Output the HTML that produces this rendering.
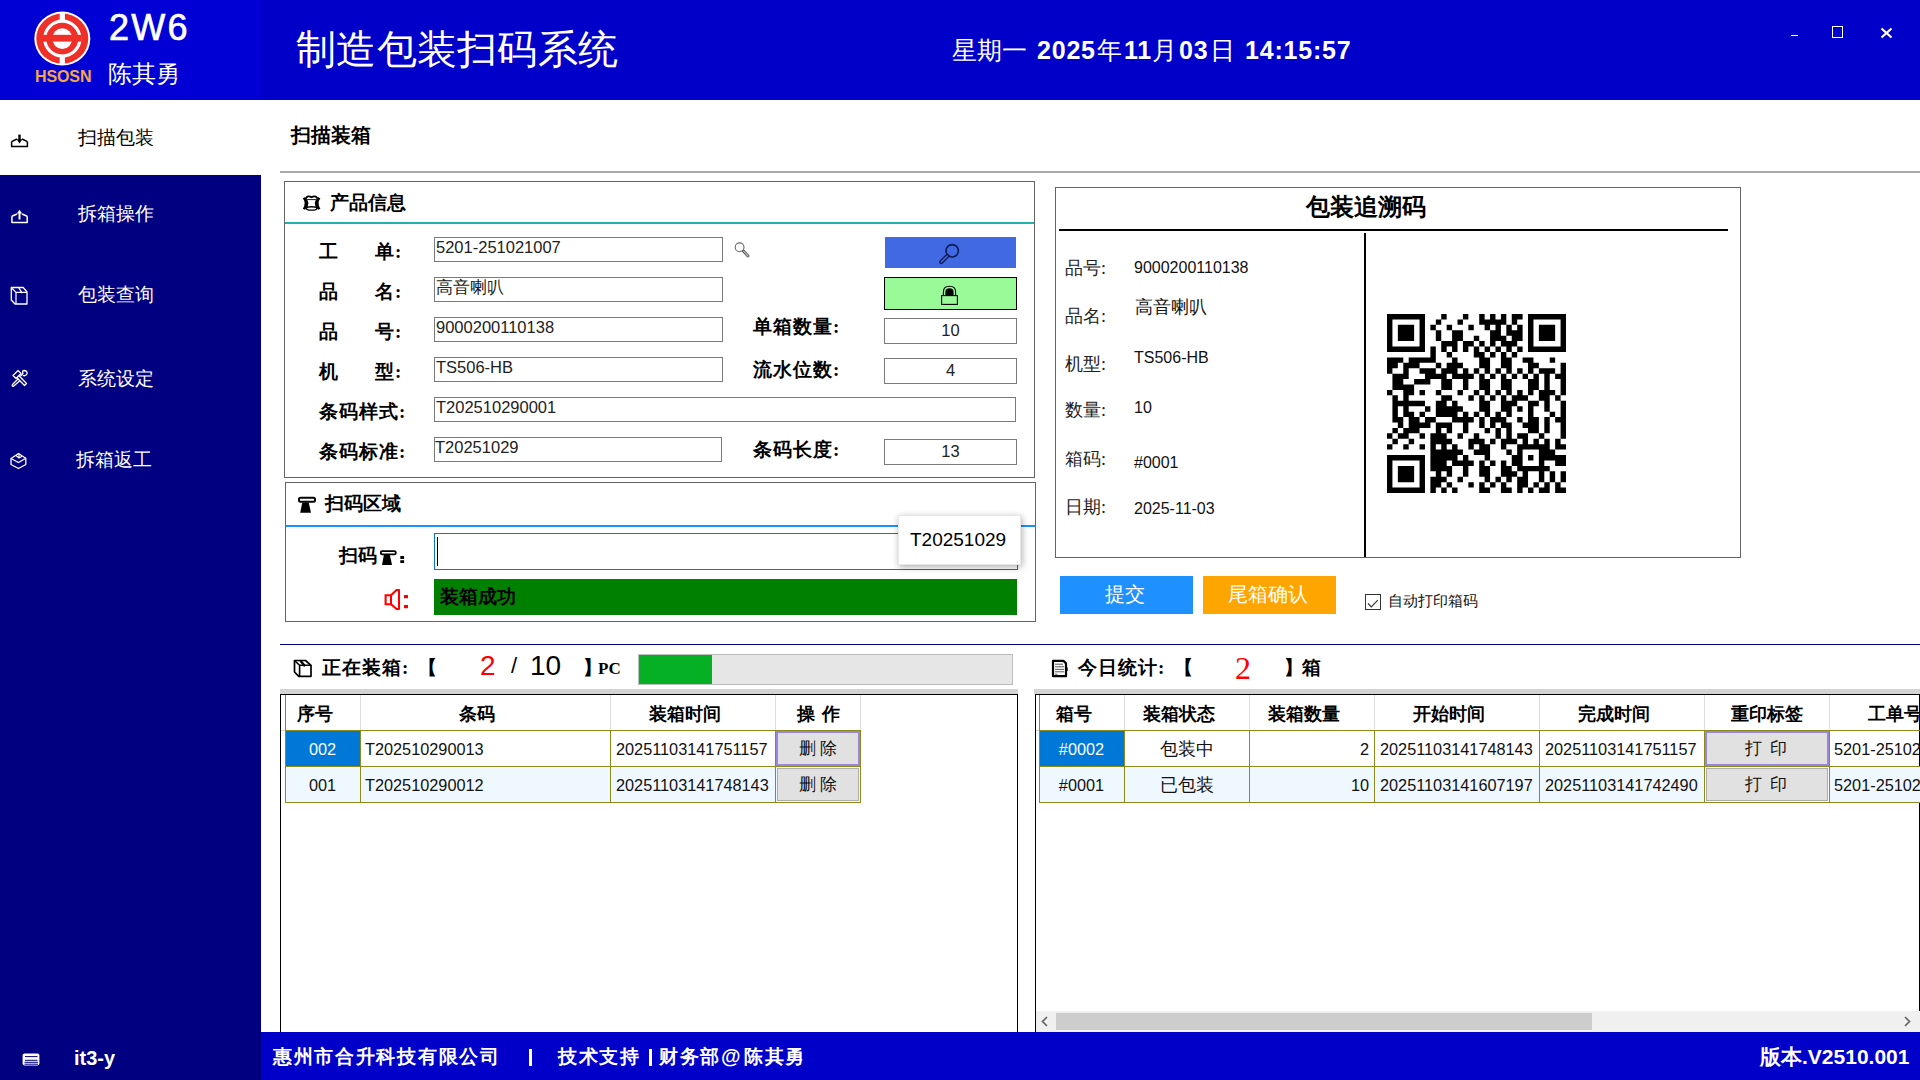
<!DOCTYPE html>
<html><head><meta charset="utf-8">
<style>
*{margin:0;padding:0;box-sizing:border-box}
html,body{width:1920px;height:1080px;overflow:hidden;background:#fff;font-family:"Liberation Sans",sans-serif;color:#000}
.a{position:absolute;white-space:nowrap;line-height:1}
.sf{font-family:"Liberation Serif",serif}
.b{font-weight:bold}
.w{color:#fff}
.inp{position:absolute;border:1px solid #7a7a7a;background:#fff}
.lbl{position:absolute;white-space:nowrap;line-height:1;font-family:"Liberation Serif",serif;font-weight:bold;font-size:19px}
.cell{position:absolute;line-height:1;white-space:nowrap}
</style></head><body>
<!-- HEADER -->
<div class="a" style="left:0;top:0;width:1920px;height:100px;background:#0000c8"></div>
<div class="a" style="left:0;top:0;width:262px;height:100px;background:#0000d4"></div>
<svg class="a" style="left:0;top:0" width="100" height="100" viewBox="0 0 100 100">
  <g transform="translate(62.3,38.6)">
  <ellipse rx="28" ry="27" fill="#fff"/>
  <ellipse rx="26" ry="25" fill="#ee3028"/>
  <ellipse rx="17.6" ry="17.4" fill="none" stroke="#fff" stroke-width="3.2"/>
  <ellipse rx="10" ry="10.3" fill="#fff"/>
  <rect x="-19.5" y="-3.8" width="39" height="6.8" fill="#ee3028"/>
  <rect x="-2.6" y="-25.5" width="5.2" height="7" fill="#fff"/>
  <rect x="-2.6" y="18.5" width="5.2" height="7" fill="#fff"/>
  </g>
</svg>
<div class="a b" style="left:35px;top:69px;font-size:16px;color:#f5a54a;letter-spacing:-0.1px">HSOSN</div>
<div class="a w" style="left:109px;top:10px;font-size:36px;letter-spacing:2.2px;-webkit-text-stroke:0.7px #fff">2W6</div>
<div class="a w" style="left:108px;top:63px;font-size:23.5px">陈其勇</div>
<div class="a w" style="left:296px;top:29px;font-size:40px;letter-spacing:0.3px">制造包装扫码系统</div>
<div class="a w" style="left:952px;top:38px;font-size:25px">星期一</div>
<div class="a w b" style="left:1037px;top:38px;font-size:25px;letter-spacing:0.8px">2025</div>
<div class="a w" style="left:1097px;top:38px;font-size:25px">年</div>
<div class="a w b" style="left:1124px;top:38px;font-size:25px;letter-spacing:0.8px">11</div>
<div class="a w" style="left:1152px;top:38px;font-size:25px">月</div>
<div class="a w b" style="left:1179px;top:38px;font-size:25px;letter-spacing:0.8px">03</div>
<div class="a w" style="left:1210px;top:38px;font-size:25px">日</div>
<div class="a w b" style="left:1245px;top:38px;font-size:25px;letter-spacing:0.8px">14:15:57</div>
<div class="a" style="left:1791px;top:35px;width:7px;height:1px;background:#fff"></div>
<div class="a" style="left:1832px;top:26px;width:11px;height:12px;border:1px solid #fff"></div>
<svg class="a" style="left:1880px;top:27px" width="13" height="12" viewBox="0 0 13 12"><path d="M1.5 1.5L11.5 10.5M11.5 1.5L1.5 10.5" stroke="#fff" stroke-width="2.2"/></svg>

<!-- SIDEBAR -->
<div class="a" style="left:0;top:175px;width:261px;height:905px;background:#000080"></div>
<div class="a" style="left:78px;top:128px;font-size:19px">扫描包装</div>
<div class="a w" style="left:78px;top:204px;font-size:19px">拆箱操作</div>
<div class="a w" style="left:78px;top:285px;font-size:19px">包装查询</div>
<div class="a w" style="left:78px;top:369px;font-size:19px">系统设定</div>
<div class="a w" style="left:76px;top:450px;font-size:19px">拆箱返工</div>
<div class="a w b" style="left:74px;top:1048px;font-size:20px">it3-y</div>

<!-- FOOTER -->
<div class="a" style="left:261px;top:1032px;width:1659px;height:48px;background:#0000c8;z-index:5"></div>
<div class="a w b sf" style="z-index:6;left:273px;top:1047px;font-size:19px;letter-spacing:1.7px">惠州市合升科技有限公司</div>
<div class="a" style="z-index:6;left:529px;top:1049px;width:2.5px;height:17px;background:#fff"></div>
<div class="a w b sf" style="z-index:6;left:558px;top:1047px;font-size:19px;letter-spacing:1.7px">技术支持</div>
<div class="a" style="z-index:6;left:649px;top:1049px;width:2.5px;height:17px;background:#fff"></div>
<div class="a w b sf" style="z-index:6;left:659px;top:1047px;font-size:19px;letter-spacing:1.7px">财务部</div>
<div class="a w b" style="z-index:6;left:721px;top:1046px;font-size:20px">@</div>
<div class="a w b sf" style="z-index:6;left:744px;top:1047px;font-size:19px;letter-spacing:1.7px">陈其勇</div>
<div class="a w b" style="z-index:6;left:1760px;top:1046px;font-size:21px">版本.V2510.001</div>

<!-- CONTENT TOP -->
<div class="lbl" style="left:291px;top:125px;font-size:20px">扫描装箱</div>
<div class="a" style="left:280px;top:171px;width:1640px;height:2px;background:#a9a9a9"></div>


<!-- PRODUCT INFO BOX -->
<div class="a" style="left:284px;top:181px;width:751px;height:297px;border:1px solid #646464"></div>
<div class="a" style="left:285px;top:222px;width:749px;height:2px;background:#20b2aa"></div>
<div class="lbl" style="left:330px;top:193px;font-size:19px">产品信息</div>
<div class="lbl" style="left:319px;top:242px">工</div><div class="lbl" style="left:375px;top:242px;letter-spacing:1px">单:</div>
<div class="lbl" style="left:319px;top:282px">品</div><div class="lbl" style="left:375px;top:282px;letter-spacing:1px">名:</div>
<div class="lbl" style="left:319px;top:322px">品</div><div class="lbl" style="left:375px;top:322px;letter-spacing:1px">号:</div>
<div class="lbl" style="left:319px;top:362px">机</div><div class="lbl" style="left:375px;top:362px;letter-spacing:1px">型:</div>
<div class="lbl" style="left:319px;top:402px;letter-spacing:1px">条码样式:</div>
<div class="lbl" style="left:319px;top:442px;letter-spacing:1px">条码标准:</div>
<div class="inp" style="left:434px;top:237px;width:289px;height:25px"></div>
<div class="inp" style="left:434px;top:277px;width:289px;height:25px"></div>
<div class="inp" style="left:434px;top:317px;width:289px;height:25px"></div>
<div class="inp" style="left:434px;top:357px;width:289px;height:25px"></div>
<div class="inp" style="left:434px;top:397px;width:582px;height:25px"></div>
<div class="inp" style="left:434px;top:437px;width:288px;height:25px"></div>
<div class="a" style="left:436px;top:239px;font-size:16.5px;color:#222">5201-251021007</div>
<div class="a" style="left:436px;top:279px;font-size:16.5px;color:#222">高音喇叭</div>
<div class="a" style="left:436px;top:319px;font-size:16.5px;color:#222">9000200110138</div>
<div class="a" style="left:436px;top:359px;font-size:16.5px;color:#222">TS506-HB</div>
<div class="a" style="left:436px;top:399px;font-size:16.5px;color:#222">T202510290001</div>
<div class="a" style="left:435px;top:439px;font-size:16.5px;color:#222">T20251029</div>
<div class="lbl" style="left:753px;top:317px;letter-spacing:1px">单箱数量:</div>
<div class="lbl" style="left:753px;top:360px;letter-spacing:1px">流水位数:</div>
<div class="lbl" style="left:753px;top:440px;letter-spacing:1px">条码长度:</div>
<div class="inp" style="left:884px;top:318px;width:133px;height:26px;text-align:center;font-size:16.5px;line-height:23px;color:#222">10</div>
<div class="inp" style="left:884px;top:358px;width:133px;height:26px;text-align:center;font-size:16.5px;line-height:23px;color:#222">4</div>
<div class="inp" style="left:884px;top:439px;width:133px;height:26px;text-align:center;font-size:16.5px;line-height:23px;color:#222">13</div>
<div class="a" style="left:885px;top:237px;width:131px;height:31px;background:#4169e1"></div>
<div class="a" style="left:884px;top:277px;width:133px;height:33px;background:#98fb98;border:1.5px solid #000"></div>

<!-- SCAN BOX -->
<div class="a" style="left:285px;top:482px;width:751px;height:140px;border:1px solid #646464"></div>
<div class="a" style="left:286px;top:525px;width:749px;height:2px;background:#1e90ff"></div>
<div class="lbl" style="left:325px;top:494px;font-size:19px">扫码区域</div>
<div class="lbl" style="left:339px;top:546px">扫码</div>

<div class="a" style="left:434px;top:533px;width:584px;height:37px;border:1px solid #0078d7;background:#fff"></div>
<div class="a" style="left:437px;top:537px;width:1px;height:29px;background:#000"></div>
<div class="a" style="left:434px;top:579px;width:583px;height:36px;background:#008000"></div>
<div class="lbl" style="left:440px;top:587px">装箱成功</div>
<div class="a" style="left:898px;top:515px;width:123px;height:50px;background:#fff;box-shadow:1px 2px 7px rgba(0,0,0,0.32);border:1px solid #e8e8e8"></div>
<div class="a" style="left:910px;top:530px;font-size:19px;color:#000">T20251029</div>

<!-- TRACE CARD -->
<div class="a" style="left:1055px;top:187px;width:686px;height:371px;border:1px solid #646464"></div>
<div class="lbl" style="left:1306px;top:195px;font-size:24px">包装追溯码</div>
<div class="a" style="left:1059px;top:229px;width:669px;height:2px;background:#000"></div>
<div class="a" style="left:1364px;top:233px;width:2px;height:324px;background:#000"></div>
<div class="a sf" style="left:1065px;top:259px;font-size:18px;color:#222">品号:</div>
<div class="a sf" style="left:1065px;top:307px;font-size:18px;color:#222">品名:</div>
<div class="a sf" style="left:1065px;top:355px;font-size:18px;color:#222">机型:</div>
<div class="a sf" style="left:1065px;top:401px;font-size:18px;color:#222">数量:</div>
<div class="a sf" style="left:1065px;top:450px;font-size:18px;color:#222">箱码:</div>
<div class="a sf" style="left:1065px;top:498px;font-size:18px;color:#222">日期:</div>
<div class="a" style="left:1134px;top:260px;font-size:16px;color:#111">9000200110138</div>
<div class="a" style="left:1135px;top:299px;font-size:17.5px;color:#111">高音喇叭</div>
<div class="a" style="left:1134px;top:350px;font-size:16px;color:#111">TS506-HB</div>
<div class="a" style="left:1134px;top:400px;font-size:16px;color:#111">10</div>
<div class="a" style="left:1134px;top:455px;font-size:16px;color:#111">#0001</div>
<div class="a" style="left:1134px;top:501px;font-size:16px;color:#111">2025-11-03</div>
<svg class="a" style="left:1386.9px;top:314.4px" width="179" height="179" viewBox="0 0 33 33"><path d="M0 0h7v1h-7zM10 0h1v1h-1zM14 0h1v1h-1zM17 0h1v1h-1zM19 0h1v1h-1zM21 0h1v1h-1zM23 0h2v1h-2zM26 0h7v1h-7zM0 1h1v1h-1zM6 1h1v1h-1zM9 1h1v1h-1zM13 1h1v1h-1zM17 1h5v1h-5zM23 1h1v1h-1zM26 1h1v1h-1zM32 1h1v1h-1zM0 2h1v1h-1zM2 2h3v1h-3zM6 2h1v1h-1zM8 2h1v1h-1zM11 2h1v1h-1zM15 2h1v1h-1zM18 2h1v1h-1zM20 2h1v1h-1zM22 2h1v1h-1zM24 2h1v1h-1zM26 2h1v1h-1zM28 2h3v1h-3zM32 2h1v1h-1zM0 3h1v1h-1zM2 3h3v1h-3zM6 3h1v1h-1zM9 3h1v1h-1zM12 3h2v1h-2zM19 3h2v1h-2zM22 3h3v1h-3zM26 3h1v1h-1zM28 3h3v1h-3zM32 3h1v1h-1zM0 4h1v1h-1zM2 4h3v1h-3zM6 4h1v1h-1zM9 4h1v1h-1zM12 4h2v1h-2zM16 4h1v1h-1zM19 4h3v1h-3zM23 4h2v1h-2zM26 4h1v1h-1zM28 4h3v1h-3zM32 4h1v1h-1zM0 5h1v1h-1zM6 5h1v1h-1zM10 5h3v1h-3zM14 5h2v1h-2zM17 5h1v1h-1zM19 5h1v1h-1zM21 5h3v1h-3zM26 5h1v1h-1zM32 5h1v1h-1zM0 6h7v1h-7zM8 6h1v1h-1zM10 6h1v1h-1zM12 6h1v1h-1zM14 6h1v1h-1zM16 6h1v1h-1zM18 6h1v1h-1zM20 6h1v1h-1zM22 6h1v1h-1zM24 6h1v1h-1zM26 6h7v1h-7zM8 7h1v1h-1zM11 7h1v1h-1zM16 7h2v1h-2zM19 7h1v1h-1zM21 7h1v1h-1zM23 7h1v1h-1zM0 8h3v1h-3zM4 8h5v1h-5zM12 8h1v1h-1zM17 8h2v1h-2zM21 8h2v1h-2zM25 8h2v1h-2zM30 8h1v1h-1zM0 9h2v1h-2zM3 9h3v1h-3zM9 9h1v1h-1zM11 9h3v1h-3zM17 9h2v1h-2zM21 9h2v1h-2zM26 9h2v1h-2zM32 9h1v1h-1zM0 10h1v1h-1zM3 10h1v1h-1zM6 10h3v1h-3zM10 10h3v1h-3zM14 10h1v1h-1zM16 10h1v1h-1zM18 10h1v1h-1zM20 10h1v1h-1zM22 10h1v1h-1zM24 10h1v1h-1zM26 10h1v1h-1zM28 10h3v1h-3zM32 10h1v1h-1zM1 11h3v1h-3zM7 11h4v1h-4zM12 11h4v1h-4zM17 11h1v1h-1zM19 11h1v1h-1zM21 11h1v1h-1zM23 11h1v1h-1zM25 11h1v1h-1zM27 11h1v1h-1zM29 11h1v1h-1zM31 11h2v1h-2zM1 12h2v1h-2zM5 12h3v1h-3zM10 12h2v1h-2zM14 12h1v1h-1zM17 12h2v1h-2zM21 12h2v1h-2zM26 12h2v1h-2zM29 12h1v1h-1zM32 12h1v1h-1zM1 13h4v1h-4zM10 13h2v1h-2zM14 13h1v1h-1zM17 13h2v1h-2zM21 13h2v1h-2zM26 13h2v1h-2zM29 13h1v1h-1zM32 13h1v1h-1zM0 14h1v1h-1zM3 14h2v1h-2zM6 14h1v1h-1zM9 14h1v1h-1zM13 14h1v1h-1zM16 14h1v1h-1zM18 14h1v1h-1zM20 14h1v1h-1zM22 14h1v1h-1zM24 14h1v1h-1zM26 14h1v1h-1zM28 14h3v1h-3zM32 14h1v1h-1zM1 15h1v1h-1zM3 15h1v1h-1zM10 15h2v1h-2zM15 15h1v1h-1zM17 15h1v1h-1zM19 15h1v1h-1zM21 15h1v1h-1zM23 15h3v1h-3zM28 15h2v1h-2zM31 15h1v1h-1zM1 16h6v1h-6zM9 16h2v1h-2zM12 16h1v1h-1zM17 16h2v1h-2zM21 16h3v1h-3zM26 16h2v1h-2zM29 16h1v1h-1zM32 16h1v1h-1zM1 17h1v1h-1zM3 17h1v1h-1zM7 17h1v1h-1zM9 17h5v1h-5zM17 17h2v1h-2zM21 17h2v1h-2zM24 17h1v1h-1zM26 17h1v1h-1zM29 17h1v1h-1zM32 17h1v1h-1zM1 18h1v1h-1zM3 18h2v1h-2zM6 18h1v1h-1zM9 18h4v1h-4zM14 18h1v1h-1zM16 18h1v1h-1zM18 18h1v1h-1zM20 18h1v1h-1zM22 18h1v1h-1zM26 18h1v1h-1zM30 18h1v1h-1zM32 18h1v1h-1zM1 19h2v1h-2zM4 19h2v1h-2zM7 19h2v1h-2zM12 19h4v1h-4zM17 19h1v1h-1zM19 19h3v1h-3zM24 19h1v1h-1zM26 19h2v1h-2zM29 19h1v1h-1zM31 19h2v1h-2zM2 20h1v1h-1zM4 20h4v1h-4zM9 20h3v1h-3zM14 20h1v1h-1zM17 20h1v1h-1zM19 20h1v1h-1zM21 20h2v1h-2zM25 20h3v1h-3zM29 20h1v1h-1zM32 20h1v1h-1zM1 21h1v1h-1zM3 21h3v1h-3zM9 21h1v1h-1zM11 21h1v1h-1zM14 21h1v1h-1zM18 21h1v1h-1zM20 21h1v1h-1zM22 21h1v1h-1zM26 21h2v1h-2zM29 21h1v1h-1zM32 21h1v1h-1zM0 22h1v1h-1zM2 22h2v1h-2zM6 22h1v1h-1zM8 22h3v1h-3zM13 22h1v1h-1zM16 22h1v1h-1zM20 22h1v1h-1zM22 22h1v1h-1zM24 22h2v1h-2zM28 22h1v1h-1zM32 22h1v1h-1zM1 23h1v1h-1zM4 23h1v1h-1zM8 23h4v1h-4zM15 23h3v1h-3zM19 23h1v1h-1zM21 23h3v1h-3zM25 23h1v1h-1zM27 23h1v1h-1zM29 23h1v1h-1zM31 23h1v1h-1zM0 24h1v1h-1zM3 24h1v1h-1zM6 24h1v1h-1zM8 24h1v1h-1zM10 24h1v1h-1zM12 24h1v1h-1zM15 24h1v1h-1zM17 24h2v1h-2zM21 24h1v1h-1zM24 24h6v1h-6zM31 24h2v1h-2zM8 25h6v1h-6zM16 25h3v1h-3zM22 25h1v1h-1zM24 25h1v1h-1zM28 25h3v1h-3zM0 26h7v1h-7zM8 26h5v1h-5zM14 26h1v1h-1zM18 26h1v1h-1zM23 26h2v1h-2zM26 26h1v1h-1zM28 26h5v1h-5zM0 27h1v1h-1zM6 27h1v1h-1zM8 27h3v1h-3zM12 27h4v1h-4zM17 27h1v1h-1zM19 27h1v1h-1zM21 27h1v1h-1zM23 27h2v1h-2zM28 27h1v1h-1zM31 27h2v1h-2zM0 28h1v1h-1zM2 28h3v1h-3zM6 28h1v1h-1zM8 28h4v1h-4zM14 28h1v1h-1zM17 28h2v1h-2zM21 28h2v1h-2zM24 28h6v1h-6zM0 29h1v1h-1zM2 29h3v1h-3zM6 29h1v1h-1zM9 29h1v1h-1zM11 29h1v1h-1zM14 29h1v1h-1zM17 29h2v1h-2zM21 29h3v1h-3zM25 29h1v1h-1zM28 29h1v1h-1zM30 29h1v1h-1zM32 29h1v1h-1zM0 30h1v1h-1zM2 30h3v1h-3zM6 30h1v1h-1zM8 30h3v1h-3zM13 30h1v1h-1zM18 30h1v1h-1zM20 30h1v1h-1zM22 30h1v1h-1zM24 30h2v1h-2zM28 30h1v1h-1zM30 30h1v1h-1zM32 30h1v1h-1zM0 31h1v1h-1zM6 31h1v1h-1zM8 31h2v1h-2zM11 31h1v1h-1zM15 31h1v1h-1zM17 31h1v1h-1zM19 31h1v1h-1zM21 31h1v1h-1zM24 31h2v1h-2zM27 31h1v1h-1zM29 31h1v1h-1zM31 31h1v1h-1zM0 32h7v1h-7zM8 32h1v1h-1zM10 32h1v1h-1zM12 32h1v1h-1zM17 32h2v1h-2zM21 32h2v1h-2zM24 32h1v1h-1zM26 32h1v1h-1zM28 32h2v1h-2zM31 32h2v1h-2z" fill="#000"/></svg>

<div class="a" style="left:1060px;top:576px;width:133px;height:38px;background:#1e90ff"></div>
<div class="a w" style="left:1105px;top:584px;font-size:20px">提交</div>
<div class="a" style="left:1203px;top:576px;width:133px;height:38px;background:#ffa500"></div>
<div class="a w" style="left:1228px;top:584px;font-size:20px">尾箱确认</div>
<div class="a" style="left:1365px;top:594px;width:16px;height:16px;border:1px solid #333;background:#fff"></div>
<div class="a" style="left:1388px;top:593px;font-size:15px;color:#111">自动打印箱码</div>

<!-- SEPARATOR -->
<div class="a" style="left:280px;top:644px;width:1640px;height:1px;background:#000080"></div>

<!-- PACKING STATUS -->
<div class="lbl" style="left:322px;top:658px;letter-spacing:1px">正在装箱:</div>
<div class="lbl" style="left:418px;top:658px">【</div>
<div class="a" style="left:480px;top:652px;font-size:28px;color:#f00">2</div>
<div class="a" style="left:511px;top:655px;font-size:22px;color:#000">/</div>
<div class="a" style="left:530px;top:652px;font-size:28px;color:#000">10</div>
<div class="lbl" style="left:583px;top:658px">】</div>
<div class="lbl" style="left:598px;top:660px;font-size:17px">PC</div>
<div class="a" style="left:638px;top:654px;width:375px;height:31px;background:#e6e6e6;border:1px solid #bcbcbc"></div>
<div class="a" style="left:639px;top:655px;width:73px;height:29px;background:#06b025"></div>

<div class="lbl" style="left:1078px;top:658px;letter-spacing:1px">今日统计:</div>
<div class="lbl" style="left:1174px;top:658px">【</div>
<div class="a sf" style="left:1235px;top:652px;font-size:32px;color:#f00">2</div>
<div class="lbl" style="left:1284px;top:658px">】</div>
<div class="lbl" style="left:1302px;top:658px">箱</div>

<!-- LEFT GRID -->
<div class="a" style="left:280px;top:689px;width:738px;height:5px;background:#d3d3d3"></div>
<div class="a" style="left:280px;top:694px;width:738px;height:340px;border-left:1.5px solid #000;border-top:1.5px solid #000;border-right:1.5px solid #000"></div>

<!-- RIGHT GRID -->
<div class="a" style="left:1034px;top:689px;width:886px;height:5px;background:#d3d3d3"></div>
<div class="a" style="left:1035px;top:694px;width:885px;height:340px;border-left:1.5px solid #000;border-top:1.5px solid #000;border-right:1.5px solid #000"></div>

<!-- GRIDS -->
<div class="a" style="left:286px;top:767px;width:574px;height:35px;background:#f0f8ff;"></div>
<div class="a" style="left:286px;top:731px;width:74px;height:35px;background:#0078d7;"></div>
<div class="a" style="left:360px;top:695px;width:1px;height:35px;background:#dcdcdc;"></div>
<div class="a" style="left:610px;top:695px;width:1px;height:35px;background:#dcdcdc;"></div>
<div class="a" style="left:775px;top:695px;width:1px;height:35px;background:#dcdcdc;"></div>
<div class="a" style="left:860px;top:695px;width:1px;height:35px;background:#dcdcdc;"></div>
<div class="a" style="left:285px;top:695px;width:1px;height:108px;background:#8b8b1a;"></div>
<div class="a" style="left:360px;top:730px;width:1px;height:73px;background:#8b8b1a;"></div>
<div class="a" style="left:610px;top:730px;width:1px;height:73px;background:#8b8b1a;"></div>
<div class="a" style="left:775px;top:730px;width:1px;height:73px;background:#8b8b1a;"></div>
<div class="a" style="left:860px;top:730px;width:1px;height:73px;background:#8b8b1a;"></div>
<div class="a" style="left:285px;top:730px;width:576px;height:1px;background:#8b8b1a;"></div>
<div class="a" style="left:285px;top:766px;width:576px;height:1px;background:#8b8b1a;"></div>
<div class="a" style="left:285px;top:802px;width:576px;height:1px;background:#8b8b1a;"></div>
<div class="a" style="left:281px;top:730px;width:4px;height:1px;background:#d0d0d0;"></div>
<div class="a" style="left:277px;top:705px;width:75px;text-align:center;font-size:18px;font-weight:bold;">序号</div>
<div class="a" style="left:352px;top:705px;width:250px;text-align:center;font-size:18px;font-weight:bold;">条码</div>
<div class="a" style="left:602px;top:705px;width:165px;text-align:center;font-size:18px;font-weight:bold;">装箱时间</div>
<div class="a" style="left:777px;top:705px;width:85px;text-align:center;font-size:18px;font-weight:bold;letter-spacing:1px">操&nbsp;作</div>
<div class="a" style="left:285px;top:741px;width:75px;text-align:center;font-size:16.3px;color:#111;color:#fff">002</div>
<div class="a" style="left:365px;top:741px;font-size:16.3px;color:#111;">T202510290013</div>
<div class="a" style="left:616px;top:741px;font-size:16.3px;color:#111;">20251103141751157</div>
<div class="a" style="left:365px;top:777px;font-size:16.3px;color:#111;">T202510290012</div>
<div class="a" style="left:616px;top:777px;font-size:16.3px;color:#111;">20251103141748143</div>
<div class="a" style="left:285px;top:777px;width:75px;text-align:center;font-size:16.3px;color:#111;">001</div>
<div class="a" style="left:776px;top:731px;width:84px;height:35px;background:#e1e1e1;border:2px solid #9a86de"></div>
<div class="a" style="left:777px;top:768px;width:82px;height:33px;background:#e1e1e1;border:1px solid #adadad"></div>
<div class="a" style="left:776px;top:740px;width:84px;text-align:center;font-size:17px;color:#111">删&nbsp;除</div>
<div class="a" style="left:776px;top:776px;width:84px;text-align:center;font-size:17px;color:#111">删&nbsp;除</div>
<div class="a" style="left:1040px;top:767px;width:665px;height:35px;background:#f0f8ff;"></div>
<div class="a" style="left:1829px;top:767px;width:100px;height:35px;background:#f0f8ff;"></div>
<div class="a" style="left:1040px;top:731px;width:84px;height:35px;background:#0078d7;"></div>
<div class="a" style="left:1124px;top:695px;width:1px;height:35px;background:#dcdcdc;"></div>
<div class="a" style="left:1249px;top:695px;width:1px;height:35px;background:#dcdcdc;"></div>
<div class="a" style="left:1374px;top:695px;width:1px;height:35px;background:#dcdcdc;"></div>
<div class="a" style="left:1539px;top:695px;width:1px;height:35px;background:#dcdcdc;"></div>
<div class="a" style="left:1704px;top:695px;width:1px;height:35px;background:#dcdcdc;"></div>
<div class="a" style="left:1829px;top:695px;width:1px;height:35px;background:#dcdcdc;"></div>
<div class="a" style="left:1039px;top:695px;width:1px;height:108px;background:#8b8b1a;"></div>
<div class="a" style="left:1124px;top:730px;width:1px;height:73px;background:#8b8b1a;"></div>
<div class="a" style="left:1249px;top:730px;width:1px;height:73px;background:#8b8b1a;"></div>
<div class="a" style="left:1374px;top:730px;width:1px;height:73px;background:#8b8b1a;"></div>
<div class="a" style="left:1539px;top:730px;width:1px;height:73px;background:#8b8b1a;"></div>
<div class="a" style="left:1704px;top:730px;width:1px;height:73px;background:#8b8b1a;"></div>
<div class="a" style="left:1829px;top:730px;width:1px;height:73px;background:#8b8b1a;"></div>
<div class="a" style="left:1039px;top:730px;width:881px;height:1px;background:#8b8b1a;"></div>
<div class="a" style="left:1039px;top:766px;width:881px;height:1px;background:#8b8b1a;"></div>
<div class="a" style="left:1039px;top:802px;width:881px;height:1px;background:#8b8b1a;"></div>
<div class="a" style="left:1036px;top:730px;width:3px;height:1px;background:#d0d0d0;"></div>
<div class="a" style="left:1031px;top:705px;width:85px;text-align:center;font-size:18px;font-weight:bold;">箱号</div>
<div class="a" style="left:1116px;top:705px;width:125px;text-align:center;font-size:18px;font-weight:bold;">装箱状态</div>
<div class="a" style="left:1241px;top:705px;width:125px;text-align:center;font-size:18px;font-weight:bold;">装箱数量</div>
<div class="a" style="left:1366px;top:705px;width:165px;text-align:center;font-size:18px;font-weight:bold;">开始时间</div>
<div class="a" style="left:1531px;top:705px;width:165px;text-align:center;font-size:18px;font-weight:bold;">完成时间</div>
<div class="a" style="left:1704px;top:705px;width:125px;text-align:center;font-size:18px;font-weight:bold;">重印标签</div>
<div class="a" style="left:1829px;top:705px;width:131px;text-align:center;font-size:18px;font-weight:bold;">工单号</div>
<div class="a" style="left:1039px;top:741px;width:85px;text-align:center;font-size:16.3px;color:#111;color:#fff">#0002</div>
<div class="a" style="left:1039px;top:777px;width:85px;text-align:center;font-size:16.3px;color:#111;">#0001</div>
<div class="a" style="left:1124px;top:740px;width:125px;text-align:center;font-size:18px;color:#111">包装中</div>
<div class="a" style="left:1124px;top:776px;width:125px;text-align:center;font-size:18px;color:#111">已包装</div>
<div class="a" style="left:1249px;top:741px;width:120px;text-align:right;font-size:16.3px;color:#111;">2</div>
<div class="a" style="left:1249px;top:777px;width:120px;text-align:right;font-size:16.3px;color:#111;">10</div>
<div class="a" style="left:1380px;top:741px;font-size:16.3px;color:#111;">20251103141748143</div>
<div class="a" style="left:1380px;top:777px;font-size:16.3px;color:#111;">20251103141607197</div>
<div class="a" style="left:1545px;top:741px;font-size:16.3px;color:#111;">20251103141751157</div>
<div class="a" style="left:1545px;top:777px;font-size:16.3px;color:#111;">20251103141742490</div>
<div class="a" style="left:1705px;top:731px;width:124px;height:35px;background:#e1e1e1;border:2px solid #9a86de"></div>
<div class="a" style="left:1706px;top:768px;width:122px;height:33px;background:#e1e1e1;border:1px solid #adadad"></div>
<div class="a" style="left:1705px;top:740px;width:124px;text-align:center;font-size:17px;color:#111;letter-spacing:2px">打&nbsp;印</div>
<div class="a" style="left:1705px;top:776px;width:124px;text-align:center;font-size:17px;color:#111;letter-spacing:2px">打&nbsp;印</div>
<div class="a" style="left:1834px;top:741px;font-size:16.3px;color:#111;">5201-25102</div>
<div class="a" style="left:1834px;top:777px;font-size:16.3px;color:#111;">5201-25102</div>
<div class="a" style="left:1036px;top:1011px;width:884px;height:21px;background:#f0f0f0;"></div>
<div class="a" style="left:1056px;top:1013px;width:536px;height:17px;background:#cdcdcd;"></div>
<svg class="a" style="left:1038px;top:1013px" width="14" height="17"><path d="M9 4L4.5 8.5L9 13" fill="none" stroke="#606060" stroke-width="1.6"/></svg>
<svg class="a" style="left:1900px;top:1013px" width="14" height="17"><path d="M5 4L9.5 8.5L5 13" fill="none" stroke="#606060" stroke-width="1.6"/></svg>

<!-- ICONS -->
<svg class="a" style="left:0;top:120px" width="40" height="40" viewBox="0 120 40 40">
 <path d="M11.6 141.6V146.4H27.4V141.6" fill="none" stroke="#000" stroke-width="1.5" stroke-linejoin="round"/>
 <path d="M11.6 141.6L17 139M27.4 141.6L22 139" fill="none" stroke="#000" stroke-width="1.5"/>
 <path d="M19.5 134.6V140" stroke="#000" stroke-width="2.4"/>
 <path d="M16.6 139.2H22.4L19.5 143.6Z" fill="#000"/>
</svg>
<svg class="a" style="left:0;top:200px" width="40" height="30" viewBox="0 200 40 30">
 <path d="M11.9 216.2V222.5H27.2V216.2" fill="none" stroke="#fff" stroke-width="1.5" stroke-linejoin="round"/>
 <path d="M11.9 216.2L17 214M27.2 216.2L22 214" fill="none" stroke="#fff" stroke-width="1.5"/>
 <path d="M19.5 213V219.5" stroke="#fff" stroke-width="2"/>
 <path d="M16.8 213.6H22.2L19.5 209.8Z" fill="#fff"/>
</svg>
<svg class="a" style="left:0;top:280px" width="40" height="30" viewBox="0 280 40 30">
 <path d="M11.3 287.5H23.2L27 292V304H15L11.3 300Z" fill="none" stroke="#fff" stroke-width="1.3" stroke-linejoin="round"/>
 <path d="M11.3 287.5L16 292.3H27M16 292.3V304M18.8 287.8L22.3 293.2" fill="none" stroke="#fff" stroke-width="1.2"/>
</svg>
<svg class="a" style="left:0;top:364px" width="40" height="30" viewBox="0 364 40 30">
 <path d="M13 375.5L18 370.5L21 373.5L16 378.5Z" fill="none" stroke="#fff" stroke-width="1.3" stroke-linejoin="round"/>
 <path d="M18.8 375.5L26.5 383.5L24.5 385.5L16.8 377.5" fill="none" stroke="#fff" stroke-width="1.3" stroke-linejoin="round"/>
 <path d="M18 379L12.5 384.5Q11.5 386.5 13.5 386.3L19.8 380.8M20.5 376L23 373.5Q21.5 370.5 24.5 370.5Q27.5 371 27 374Q25.5 376.5 22.8 375.5" fill="none" stroke="#fff" stroke-width="1.3" stroke-linejoin="round"/>
</svg>
<svg class="a" style="left:0;top:448px" width="40" height="26" viewBox="0 448 40 26">
 <path d="M11 458.5L18.5 453.5L25.8 458.2V464.5L18.5 468.5L11 464.5Z" fill="none" stroke="#fff" stroke-width="1.3" stroke-linejoin="round"/>
 <path d="M11 458.5L18.5 462.5L25.8 458.2M16 455.5L19 458L22 456.2M19 453.5V457" fill="none" stroke="#fff" stroke-width="1.2"/>
</svg>
<svg class="a" style="left:15px;top:1045px;z-index:6" width="30" height="27" viewBox="15 1045 30 27">
 <rect x="22.6" y="1053.6" width="16.8" height="11.8" rx="1.8" fill="#fff"/>
 <path d="M25 1056.6H37.5M25 1060.3H37.5M24.5 1062.3H38M24.5 1064.2H38" stroke="#000080" stroke-width="1"/>
</svg>
<!-- product info icon -->
<svg class="a" style="left:296px;top:190px" width="30" height="26" viewBox="296 190 30 26">
 <path d="M302.8 198.3Q306.6 203.5 302.8 208.8L305 209.8Q312.2 203.5 305 197.3Z" fill="#000"/>
 <path d="M320.4 198.3Q316.6 203.5 320.4 208.8L318.2 209.8Q311 203.5 318.2 197.3Z" fill="#000"/>
 <path d="M305.5 198.8Q307.5 194.8 311.6 197.2Q315.7 194.8 317.7 198.8" fill="none" stroke="#000" stroke-width="1.8"/>
 <path d="M307 199.6H316.2" stroke="#000" stroke-width="0.9"/>
 <ellipse cx="311.6" cy="208.4" rx="5.2" ry="1.7" fill="none" stroke="#000" stroke-width="1.4"/>
</svg>
<!-- scanner icons -->
<svg class="a" style="left:292px;top:492px" width="30" height="26" viewBox="292 492 30 26">
 <rect x="299" y="497.8" width="16" height="4" rx="1.5" fill="none" stroke="#000" stroke-width="2"/>
 <path d="M302.3 502.5H308.7L311 512.7H300.2Z" fill="#000"/>
</svg>
<svg class="a" style="left:376px;top:540px" width="30" height="30" viewBox="376 540 30 30">
 <rect x="380.8" y="551.2" width="15" height="3.2" rx="1.3" fill="none" stroke="#000" stroke-width="1.8"/>
 <path d="M384 554.5H389.8L392 565H382Z" fill="#000"/>
 <rect x="400.3" y="556" width="3.8" height="3" fill="#000"/><rect x="400.3" y="560.2" width="3.8" height="2.8" fill="#000"/>
</svg>
<!-- speaker -->
<svg class="a" style="left:378px;top:582px" width="36" height="32" viewBox="378 582 36 32">
 <path d="M385.6 595.2H391V604.2H385.6Z" fill="none" stroke="#f00" stroke-width="2.1"/>
 <path d="M391 595.2L396.6 590H399V609H396.6L391 604.2" fill="none" stroke="#f00" stroke-width="2.1" stroke-linejoin="round"/>
 <rect x="404" y="595" width="4" height="3.2" fill="#f00"/><rect x="404" y="605" width="4" height="3.2" fill="#f00"/>
</svg>
<!-- small magnifier -->
<svg class="a" style="left:728px;top:238px" width="28" height="24" viewBox="728 238 28 24">
 <circle cx="739.6" cy="247.3" r="4.4" fill="#fff" stroke="#6a6a6a" stroke-width="1.1"/>
 <path d="M743.6 251.2L748 256" stroke="#555" stroke-width="3" stroke-linecap="round"/>
 <path d="M743.6 251.2L748 256" stroke="#bbb" stroke-width="1.2" stroke-linecap="round"/>
</svg>
<!-- search button icon -->
<svg class="a" style="left:930px;top:236px" width="40" height="32" viewBox="930 236 40 32">
 <circle cx="952.2" cy="250.8" r="6.2" fill="none" stroke="#0a1a5a" stroke-width="1.6"/>
 <path d="M947.2 256L941.3 262" stroke="#0a1a5a" stroke-width="4.2" stroke-linecap="round"/>
 <path d="M947.2 256L941.3 262" stroke="#4a6ad8" stroke-width="1.6" stroke-linecap="round"/>
</svg>
<!-- lock icon -->
<svg class="a" style="left:930px;top:278px" width="40" height="32" viewBox="930 278 40 32">
 <path d="M943.4 295V292Q943.4 286.2 949.5 286.2Q955.6 286.2 955.6 292V295" fill="none" stroke="#000" stroke-width="1.1"/>
 <path d="M945.3 295V292.5Q945.3 288.3 949.5 288.3Q953.6 288.3 953.6 292.5V295Z" fill="#000"/>
 <rect x="941.6" y="295.6" width="15.8" height="8.8" fill="none" stroke="#000" stroke-width="1.1"/>
</svg>
<!-- box icon -->
<svg class="a" style="left:290px;top:655px" width="26" height="26" viewBox="290 655 26 26">
 <path d="M294.5 660.5H305.5L311 665.3V676.3H298.8L294.5 672Z" fill="none" stroke="#000" stroke-width="1.7" stroke-linejoin="round"/>
 <path d="M294.5 660.5L299.6 665.3H311M299.6 665.3V676.3" fill="none" stroke="#000" stroke-width="1.6"/>
 <path d="M300.5 660.8L305 666.2" stroke="#000" stroke-width="2.4"/>
</svg>
<!-- doc icon -->
<svg class="a" style="left:1045px;top:655px" width="26" height="26" viewBox="1045 655 26 26">
 <path d="M1053 660.8H1063.4L1066 663.4V676.2H1053Z" fill="#fff" stroke="#000" stroke-width="2.2" stroke-linejoin="round"/>
 <path d="M1055 664.2H1063M1055 666.8H1064M1055 669.4H1064M1055 671.8H1064M1055 674.2H1057.5" stroke="#555" stroke-width="1"/>
 <rect x="1065.5" y="667.5" width="2.2" height="3.5" fill="#000"/>
</svg>
<!-- checkbox tick -->
<svg class="a" style="left:1360px;top:590px" width="26" height="26" viewBox="1360 590 26 26">
 <path d="M1368 603.5L1371.3 606.8L1377.8 600.2" fill="none" stroke="#333" stroke-width="1.2"/>
</svg>
</body></html>
